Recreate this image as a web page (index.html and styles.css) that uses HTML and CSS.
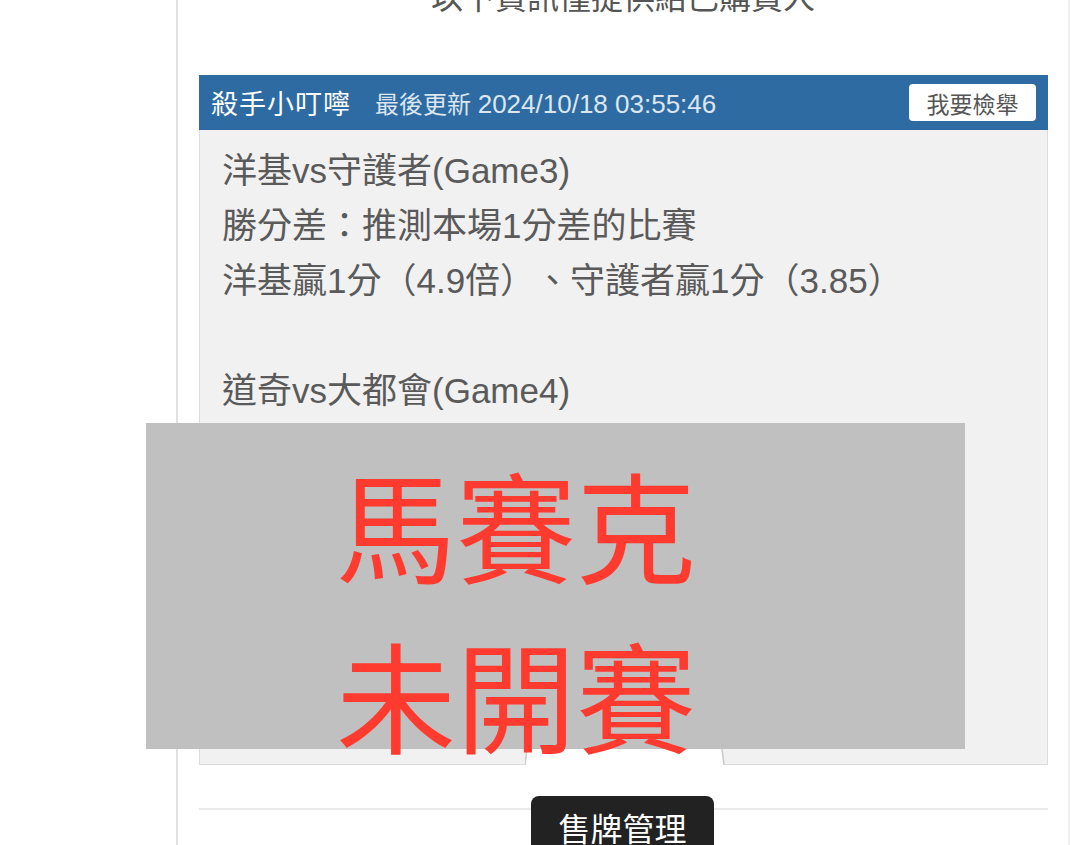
FILE: index.html
```html
<!DOCTYPE html>
<html lang="zh-Hant">
<head>
	<meta charset="UTF-8">
	<title>殺手小叮嚀</title>
	<link rel="stylesheet" href="styles.css">
</head>
<body>

	<div class="page">
		<p class="notice">以下資訊僅提供給已購買人</p>

		<div class="panel">
			<div class="panel-head">
				<span class="author">殺手小叮嚀</span>
				<span class="updated">最後更新 <span class="stamp">2024/10/18 03:55:46</span></span>
				<button class="report" type="button">我要檢舉</button>
			</div>
			<div class="panel-body">
				<p>洋基vs守護者(Game3)</p>
				<p>勝分差：推測本場1分差的比賽</p>
				<p>洋基贏1分（4.9倍）、守護者贏1分（3.85）</p>
				<p>&nbsp;</p>
				<p>道奇vs大都會(Game4)</p>
				<svg class="more-tab" width="200" height="24" viewBox="0 0 200 24">
					<polygon points="3,0 196,0 199,24 0,24" fill="#fff"/>
					<path d="M3 0 L0 24 M196 0 L199 24" stroke="#c9c9c9" stroke-width="1.5" fill="none"/>
				</svg>
			</div>
		</div>

		<hr class="rule">
	</div>

	<!-- mosaic cover over the unreleased pick -->
	<div class="cover">
		<p>馬賽克</p>
		<p>未開賽</p>
	</div>

	<div class="tip">售牌管理</div>

</body>
</html>
```

FILE: styles.css
```css
body {
	margin: 0;
	background: #fff;
	font-family: "Liberation Sans", "Noto Sans CJK TC", sans-serif;
	text-spacing-trim: space-all;
	overflow: hidden;
}
p { margin: 0 }
.page {
	position: relative;
	display: flow-root;
	margin-left: 176px;
	width: 894px;
	height: 845px;
	box-sizing: border-box;
	border-left: 2px solid #e2e2e2;
	border-right: 2px solid #efefef;
}
.notice {
	margin-top: -26px;
	margin-bottom: 53px;
	font-size: 32px;
	line-height: 48px;
	text-align: center;
	color: #555;
}
.panel { margin: 0 20px 0 21px }
.panel-head {
	display: flex;
	align-items: center;
	height: 55px;
	padding: 0 12px;
	background: #2e6ba2;
	color: #fff;
}
.author {
	font-size: 27px;
	letter-spacing: 1px;
}
.updated {
	margin-left: 24px;
	font-size: 24px;
	color: #dbe6f1;
}
.stamp { font-size: 26px }
.report {
	margin-left: auto;
	width: 127px;
	height: 37px;
	padding: 0;
	border: 0;
	border-radius: 4px;
	background: #fff;
	font-family: inherit;
	font-size: 23px;
	color: #555;
}
.panel-body {
	position: relative;
	height: 635px;
	box-sizing: border-box;
	padding: 13px 22px;
	border: 1px solid #dcdcdc;
	border-top: 0;
	background: #f1f1f1;
	font-size: 35px;
	line-height: 55px;
	color: #5a5a5a;
}
.more-tab {
	position: absolute;
	left: 325px;
	bottom: -1px;
}
.rule {
	margin: 43px 20px 0 21px;
	border: 0;
	border-top: 2px solid #e9e9e9;
}
.cover {
	position: absolute;
	left: 146px;
	top: 423px;
	width: 819px;
	height: 326px;
	box-sizing: border-box;
	padding: 15px 0 0 190px;
	background: #c0c0c0;
	color: #ff3b30;
	font-family: "Noto Sans CJK TC", sans-serif;
	font-size: 120px;
	line-height: 170px;
}
.tip {
	position: absolute;
	left: 531px;
	top: 796px;
	width: 183px;
	height: 70px;
	border-radius: 8px;
	background: #222;
	color: #fff;
	font-size: 32px;
	line-height: 68px;
	text-align: center;
}
```
